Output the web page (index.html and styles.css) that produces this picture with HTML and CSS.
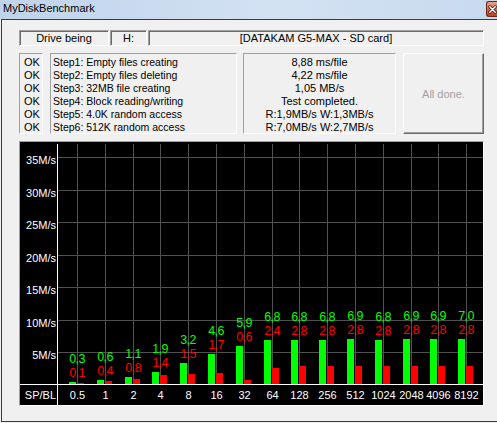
FILE: index.html
```html
<!doctype html>
<html lang="en">
<head>
<meta charset="UTF-8">
<meta name="viewport" content="width=device-width, initial-scale=1">
<title>MyDiskBenchmark</title>
<link rel="stylesheet" href="styles.css">
</head>
<body>
<div class="window">
    <div class="titlebar">
        <span class="title">MyDiskBenchmark</span>
        <div class="close-btn">
            <svg width="10" height="9" viewBox="0 0 10 9">
                <path d="M2 1.5 L8 7.5 M8 1.5 L2 7.5" stroke="#4a1a10" stroke-width="3.4" stroke-linecap="round"/>
                <path d="M2 1.5 L8 7.5 M8 1.5 L2 7.5" stroke="#fff" stroke-width="1.7" stroke-linecap="round"/>
            </svg>
        </div>
    </div>

    <div class="client">
        <div class="drive-row">
            <div class="field field-label">Drive being</div>
            <div class="field field-letter">H:</div>
            <div class="field field-name">[DATAKAM G5-MAX - SD card]</div>
        </div>

        <div class="steps-row">
            <div class="panel status">
                <div>OK</div><div>OK</div><div>OK</div>
                <div>OK</div><div>OK</div><div>OK</div>
            </div>
            <div class="panel steps">
                <div>Step1: Empty files creating</div>
                <div>Step2: Empty files deleting</div>
                <div>Step3: 32MB file creating</div>
                <div>Step4: Block reading/writing</div>
                <div>Step5: 4.0K random access</div>
                <div>Step6: 512K random access</div>
            </div>
            <div class="panel results">
                <div>8,88 ms/file</div>
                <div>4,22 ms/file</div>
                <div>1,05 MB/s</div>
                <div>Test completed.</div>
                <div>R:1,9MB/s W:1,3MB/s</div>
                <div>R:7,0MB/s W:2,7MB/s</div>
            </div>
            <div class="start-btn">All done.</div>
        </div>

        <div class="chart">
            <svg id="chart" width="463" height="263"></svg>
        </div>
    </div>
</div>

<script src="script.js"></script>
</body>
</html>
```

FILE: styles.css
```css
body {
    margin: 0;
    padding: 0;
    background: #f0f0f0;
    font-family: "Liberation Sans", Arial, sans-serif;
    font-size: 11px;
    color: #000;
}

.window {
    width: 497px;
    height: 422px;
    display: flex;
    flex-direction: column;
    overflow: hidden;
}

.titlebar {
    height: 19px;
    flex: none;
    display: flex;
    align-items: flex-start;
    background: linear-gradient(to right, #bfd3ea, #d3e2f3 55%, #c8daee);
}

.title {
    padding: 1px 0 0 3px;
    line-height: 14px;
    font-size: 11px;
}

.close-btn {
    margin: 1px 0 0 auto;
    width: 11px;
    height: 16px;
    box-sizing: border-box;
    border: 1px solid #6e2417;
    border-right: none;
    border-radius: 3px 0 0 3px;
    background: linear-gradient(#eba38d, #d86a4e 50%, #c3401f);
    display: flex;
    align-items: center;
    padding-left: 1px;
}

.close-btn svg {
    display: block;
}

.client {
    flex: 1;
    margin-left: 1px;
    border-left: 1px solid #3c3c3c;
    border-top: 1px solid #3c3c3c;
    border-bottom: 1px solid #3c3c3c;
    padding: 10px 0 0 17px;
    display: flex;
    flex-direction: column;
}

/* sunken boxes */
.field, .panel, .chart {
    box-sizing: border-box;
    border: 1px solid;
    border-color: #a0a0a0 #fff #fff #a0a0a0;
}

.drive-row {
    display: flex;
    gap: 1px;
    height: 16px;
}

.field {
    line-height: 14px;
    text-align: center;
    box-shadow: inset 1px 1px 0 #696969;
}

.field-label  { width: 90px; }
.field-letter { width: 37px; }
.field-name   { width: 336px; }

.steps-row {
    display: flex;
    margin-top: 7px;
    height: 81px;
}

.panel {
    padding-top: 2px;
    line-height: 13px;
}

.status {
    width: 24px;
    padding-left: 4px;
}

.steps {
    width: 187px;
    margin-left: 7px;
    padding-left: 2px;
    font-size: 10.5px;
    white-space: nowrap;
}

.results {
    width: 153px;
    margin-left: 6px;
    text-align: center;
}

.start-btn {
    width: 81px;
    margin-left: 7px;
    box-sizing: border-box;
    border: 1px solid;
    border-color: #fff #696969 #696969 #fff;
    box-shadow: inset -1px -1px 0 #a0a0a0;
    display: flex;
    align-items: center;
    justify-content: center;
    color: #a0a0a0;
}

.chart {
    margin-top: 7px;
    width: 465px;
    height: 265px;
}

#chart {
    display: block;
    background: #000;
    shape-rendering: crispEdges;
}

#chart text {
    font-family: "Liberation Sans", Arial, sans-serif;
    font-size: 11px;
    shape-rendering: auto;
}

.grid {
    stroke: #505050;
    stroke-width: 1;
}

.axis-line {
    stroke: #fff;
    stroke-width: 1;
}

.axis-text {
    fill: #fff;
}

.bar-read  { fill: #00ff00; }
.bar-write { fill: #ff0000; }

#chart .val-read,
#chart .val-write {
    font-size: 12.5px;
    letter-spacing: -0.6px;
}

.val-read  { fill: #00ff00; }
.val-write { fill: #ff0000; }
```

FILE: script.js
```js
// block size, read MB/s, write MB/s
const results = [
    ["0.5", 0.3, 0.1], ["1", 0.6, 0.4], ["2", 1.1, 0.8], ["4", 1.9, 1.4],
    ["8", 3.2, 1.5], ["16", 4.6, 1.7], ["32", 5.9, 0.6], ["64", 6.8, 2.4],
    ["128", 6.8, 2.8], ["256", 6.8, 2.8], ["512", 6.9, 2.8], ["1024", 6.8, 2.8],
    ["2048", 6.9, 2.8], ["4096", 6.9, 2.8], ["8192", 7.0, 2.8]
];

const NS = "http://www.w3.org/2000/svg";
const chart = document.getElementById("chart");

const baseY = 242;      // zero line row
const pxPerMB = 6.5;    // 5M/s = 32.5px
const axisX = 37;
const firstCol = 57;
const colStep = 27.8;

function add(tag, attrs, text) {
    const el = document.createElementNS(NS, tag);
    for (const k in attrs) el.setAttribute(k, attrs[k]);
    if (text !== undefined) el.textContent = text;
    chart.appendChild(el);
    return el;
}

function fmt(v) {
    return v.toFixed(1).replace(".", ",");
}

// horizontal grid + speed labels
for (let k = 1; k <= 7; k++) {
    const y = Math.floor(baseY + 1 - k * 32.5) + 0.5;
    add("line", { x1: axisX, y1: y, x2: 463, y2: y, class: "grid" });
    add("text", { x: 36, y: y + 6.5, "text-anchor": "end", class: "axis-text" }, (k * 5) + "M/s");
}

// vertical grid through column centres
results.forEach((r, i) => {
    const x = Math.round(firstCol + i * colStep) + 0.5;
    add("line", { x1: x, y1: 2, x2: x, y2: baseY, class: "grid" });
});

// bars and values
results.forEach(([size, read, write], i) => {
    const c = Math.round(firstCol + i * colStep);
    const readH = read * pxPerMB;
    const writeH = write * pxPerMB;
    const top = baseY - readH;

    add("rect", { x: c - 8, y: top, width: 7, height: readH, class: "bar-read" });
    add("rect", { x: c, y: baseY - writeH, width: 7, height: writeH, class: "bar-write" });

    add("text", { x: c, y: top - 19, "text-anchor": "middle", class: "val-read" }, fmt(read));
    add("text", { x: c, y: top - 5, "text-anchor": "middle", class: "val-write" }, fmt(write));

    add("text", { x: c + 0.5, y: 257, "text-anchor": "middle", class: "axis-text" }, size);
});

// axes
add("line", { x1: 0, y1: baseY + 0.5, x2: 463, y2: baseY + 0.5, class: "axis-line" });
add("line", { x1: axisX + 0.5, y1: 2, x2: axisX + 0.5, y2: 263, class: "axis-line" });
add("text", { x: 36, y: 257, "text-anchor": "end", class: "axis-text" }, "SP/BL");
```
